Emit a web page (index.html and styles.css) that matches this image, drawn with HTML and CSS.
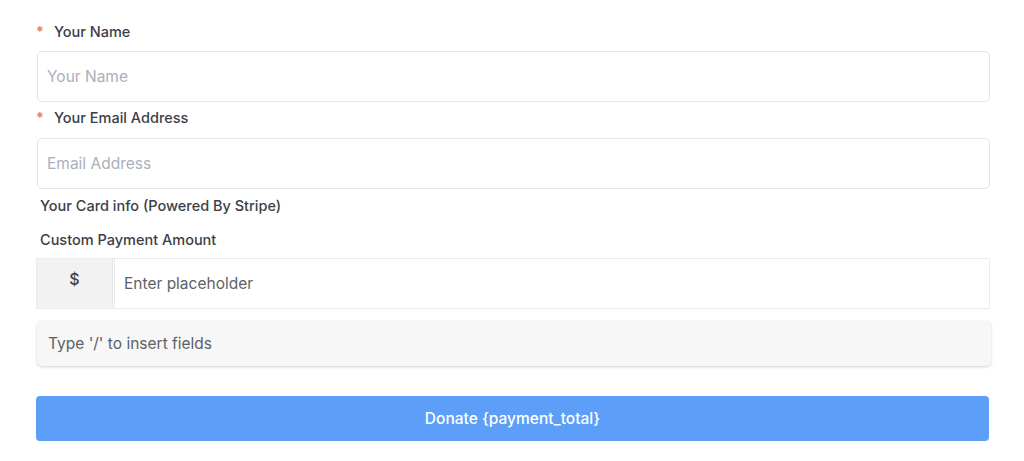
FILE: index.html
```html
<!DOCTYPE html>
<html>
<head>
<meta charset="utf-8">
<link rel="stylesheet" href="styles.css">
</head>
<body>
<form class="form">
  <div class="label label-first"><span class="req">*</span>Your Name</div>
  <div class="input"><span class="ph">Your Name</span></div>
  <div class="label label-second"><span class="req">*</span>Your Email Address</div>
  <div class="input"><span class="ph">Email Address</span></div>
  <div class="plain-label card-label">Your Card info (Powered By Stripe)</div>
  <div class="plain-label amount-label">Custom Payment Amount</div>
  <div class="group">
    <div class="prefix">$</div>
    <div class="group-input">Enter placeholder</div>
  </div>
  <div class="inserter">Type '/' to insert fields</div>
  <div class="button">Donate {payment_total}</div>
</form>
</body>
</html>
```
FILE: styles.css
```css
* { box-sizing: border-box; }
html, body { margin: 0; padding: 0; background: #ffffff; }
body {
  font-family: Inter, "Noto Sans", "Liberation Sans", sans-serif;
  color: #3a3e44;
}
.form {
  display: flex;
  flex-direction: column;
  padding: 21px 34px 0 36px;
}
.label {
  display: flex;
  align-items: center;
  height: 20px;
  font-size: 14.5px;
  font-weight: 500;
  color: #3c4046;
}
.req {
  color: #f5813a;
  width: 18px;
  font-size: 14px;
  font-weight: 700;
}
.label-first { margin-bottom: 10px; }
.label-second { margin-top: 5px; margin-bottom: 11px; }
.input {
  height: 51px;
  margin-left: 1px;
  border: 1px solid #e4e5e7;
  border-radius: 5px;
  display: flex;
  align-items: center;
  padding-left: 9px;
  font-size: 15.5px;
}
.ph { color: #aab0b8; }
.plain-label {
  height: 20px;
  display: flex;
  align-items: center;
  padding-left: 4px;
  font-size: 14.5px;
  font-weight: 500;
  color: #3c4046;
}
.card-label { margin-top: 6px; }
.amount-label { margin-top: 14px; margin-bottom: 9px; }
.group {
  display: flex;
  height: 51px;
  border: 1px solid #ebebeb;
}
.prefix {
  width: 76px;
  background: #f2f2f2;
  border-right: 1px solid #e6e6e6;
  display: flex;
  justify-content: center;
  padding-top: 10px;
  font-size: 16px;
  font-weight: 500;
  color: #3b3f45;
}
.group-input {
  flex: 1;
  margin-left: 1px;
  border-left: 1px solid #ebebeb;
  display: flex;
  align-items: center;
  padding-left: 9px;
  font-size: 15.5px;
  color: #5d6168;
}
.inserter {
  margin-top: 12px;
  margin-left: 1px;
  margin-right: -1px;
  height: 45px;
  background: #f7f7f7;
  border-radius: 5px;
  box-shadow: 0 1px 3px rgba(0,0,0,0.18);
  display: flex;
  align-items: center;
  padding-left: 11px;
  font-size: 15.5px;
  color: #5d6066;
}
.button {
  margin-top: 30px;
  margin-right: 1px;
  height: 45px;
  background: #5c9ef8;
  border-radius: 4px;
  color: #ffffff;
  display: flex;
  align-items: center;
  justify-content: center;
  font-size: 15.5px;
  font-weight: 500;
}
```
